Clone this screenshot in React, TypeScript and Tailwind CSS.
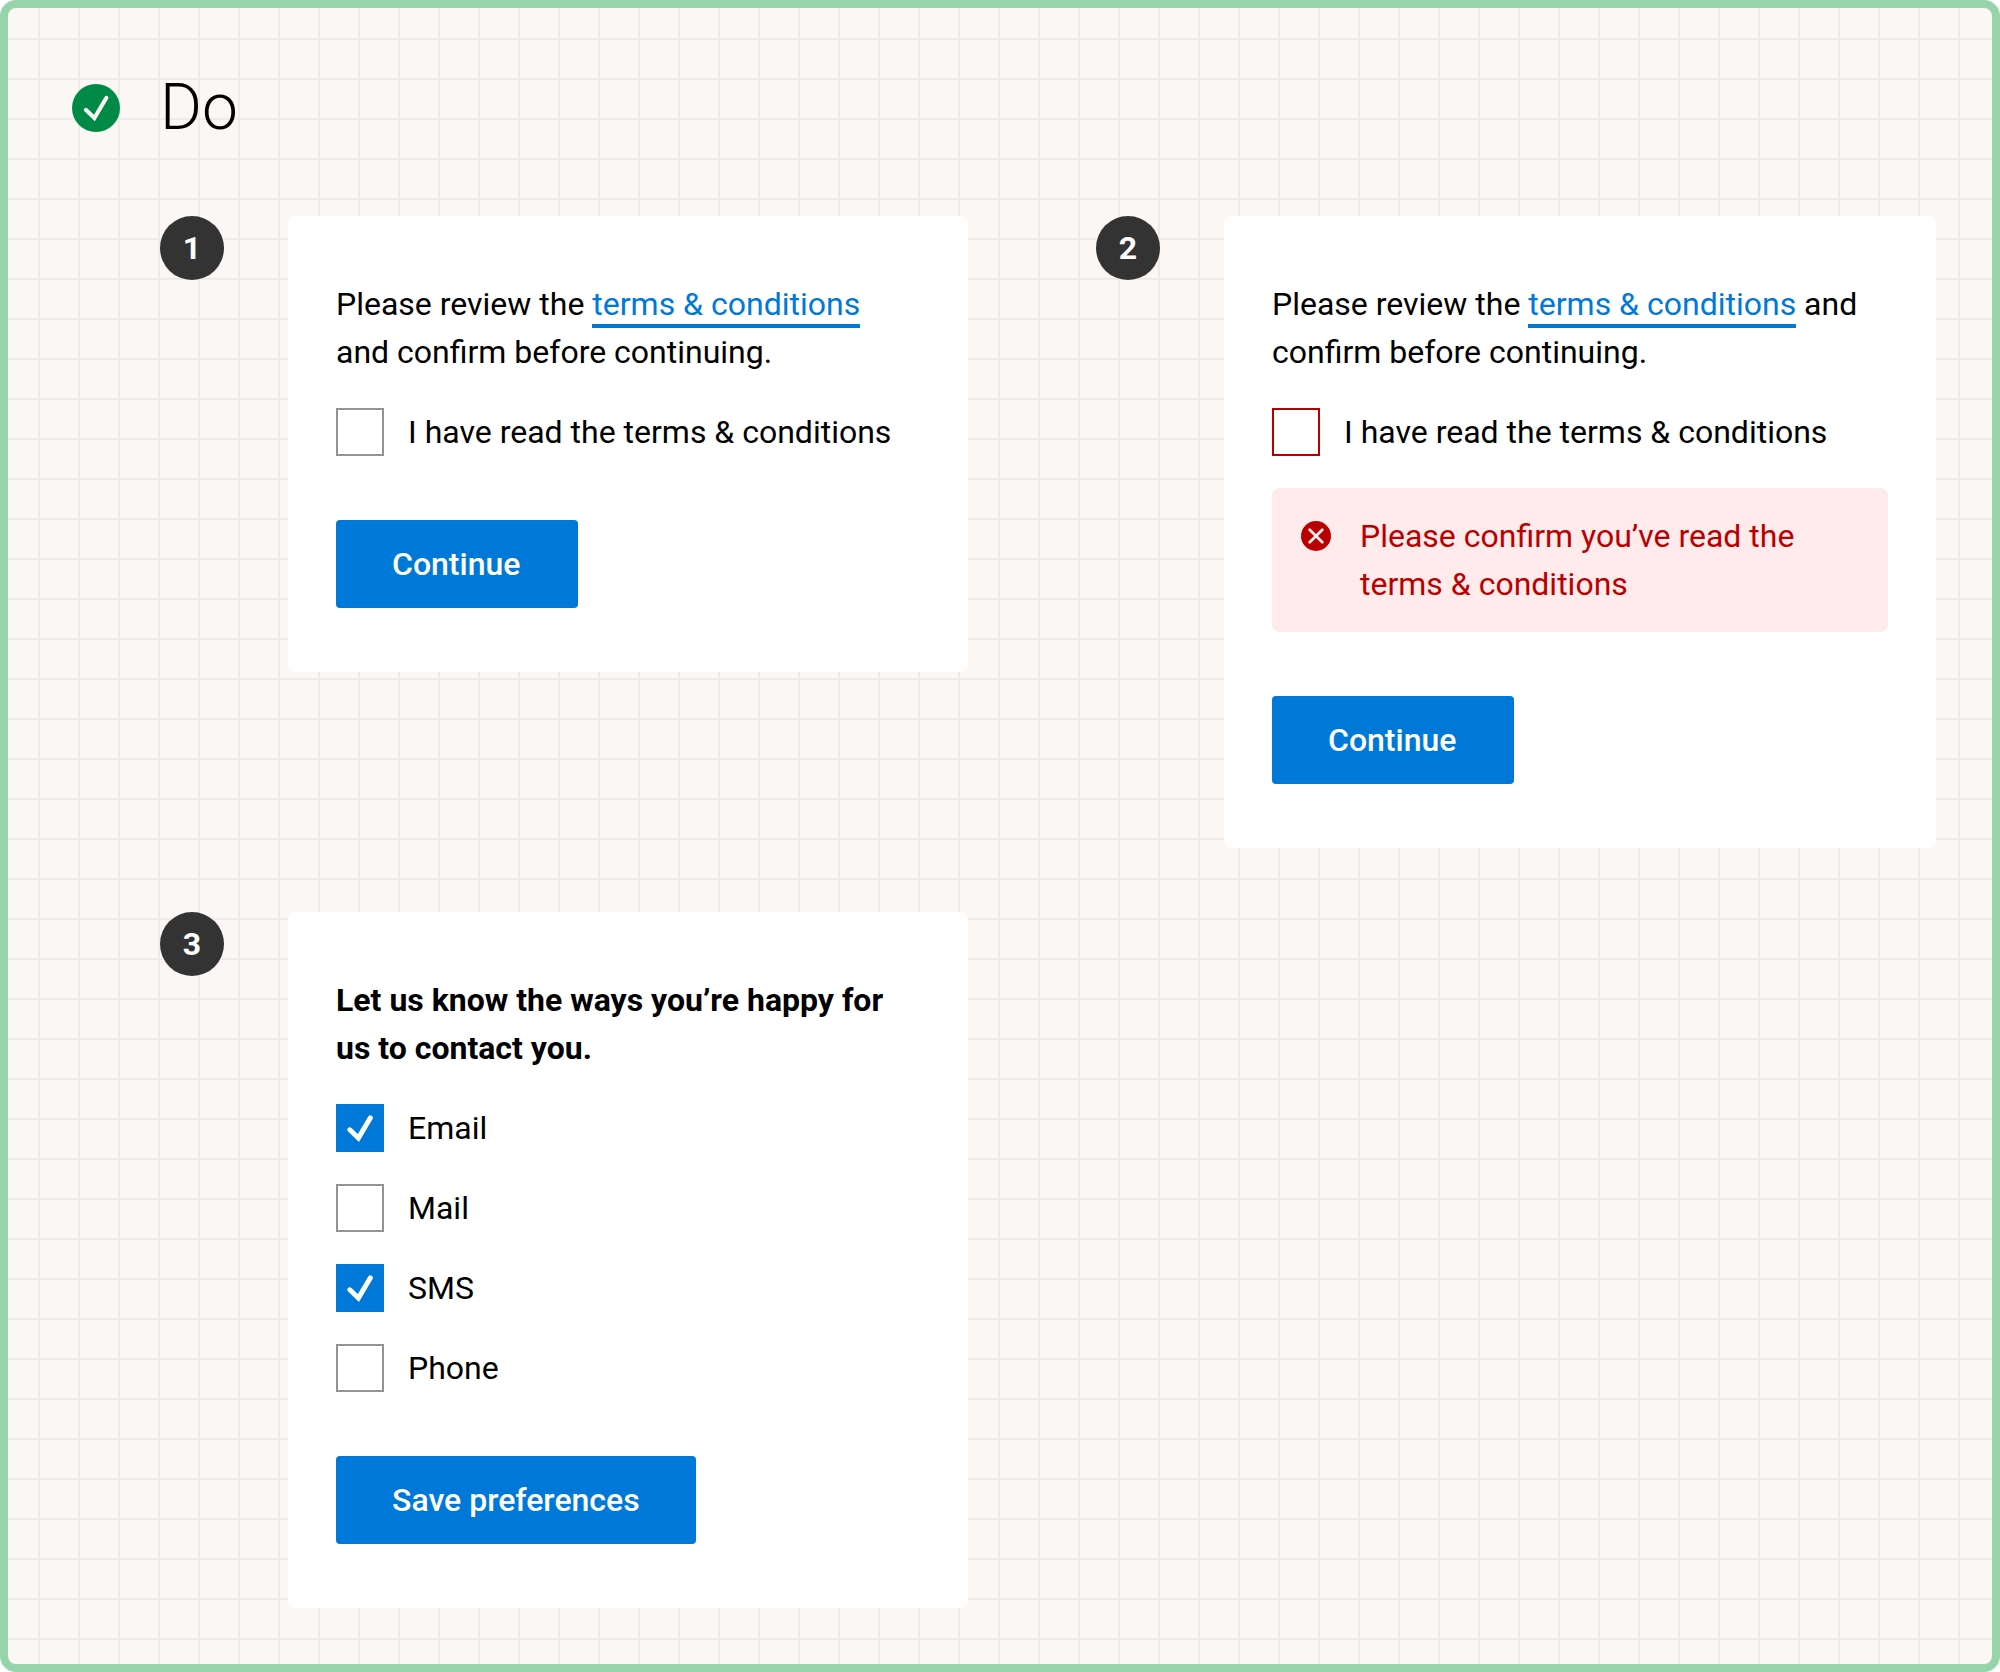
import type { ReactNode } from 'react';

function Tick({ className }: { className: string }) {
  return (
    <svg
      viewBox="0 0 48 48"
      className={`size-12 fill-none ${className}`}
      strokeLinecap="round"
      strokeLinejoin="miter"
      aria-hidden="true"
    >
      <path d="M13.8 25.8 22.4 34 34.4 13.8" />
    </svg>
  );
}

function ErrorIcon() {
  return (
    <svg viewBox="0 0 40 40" className="my-1 size-10 shrink-0" aria-hidden="true">
      <circle cx="20" cy="20" r="15" fill="#b90000" />
      <path d="m13.7 13.7 12.6 12.6m0-12.6-12.6 12.6" fill="none" stroke="#ffebeb" strokeWidth="2.8" strokeLinecap="round" />
    </svg>
  );
}

function Checkbox({
  id,
  label,
  checked = false,
  invalid = false,
}: {
  id: string;
  label: string;
  checked?: boolean;
  invalid?: boolean;
}) {
  return (
    <div className="flex items-start gap-6">
      <span className="grid size-12 shrink-0">
        <input
          id={id}
          type="checkbox"
          defaultChecked={checked}
          aria-invalid={invalid}
          className={`peer col-start-1 row-start-1 size-12 appearance-none border-2 bg-white checked:border-[#0078d7] checked:bg-[#0078d7] ${
            invalid ? 'border-[#b90000]' : 'border-[#949494]'
          }`}
        />
        <Tick className="pointer-events-none invisible col-start-1 row-start-1 stroke-white stroke-5 peer-checked:visible" />
      </span>
      <label htmlFor={id}>{label}</label>
    </div>
  );
}

function Button({ children }: { children: ReactNode }) {
  return (
    <button type="button" className="mt-16 min-w-[242px] rounded bg-[#0078d7] px-14 py-5 text-left font-medium text-white">
      {children}
    </button>
  );
}

function TermsText() {
  return (
    <p className="mb-8">
      Please review the{' '}
      <a href="#terms" className="border-b-4 border-[#0078d7] pb-px text-[#0078d7]">
        terms &amp; conditions
      </a>{' '}
      and confirm before continuing.
    </p>
  );
}

function Example({ number, children }: { number: number; children: ReactNode }) {
  return (
    <li className="flex items-start gap-16">
      <span className="flex size-16 shrink-0 items-center justify-center rounded-full bg-[#333333] font-bold text-white">
        {number}
      </span>
      <form className="min-w-0 flex-1 rounded-lg bg-white px-12 py-16">{children}</form>
    </li>
  );
}

export default function App() {
  return (
    <main className="min-h-screen rounded-2xl border-8 border-[#97d4aa] bg-[#fbf7f5] bg-[linear-gradient(to_right,transparent_30px,#efebe9_30px,#efebe9_32px,transparent_32px),linear-gradient(to_bottom,transparent_30px,#efebe9_30px,#efebe9_32px,transparent_32px)] bg-size-[40px_40px] bg-origin-padding py-14 pr-14 pl-16 font-['Roboto',sans-serif] text-[32px] leading-12 text-black">
      <header className="flex items-center gap-10">
        <Tick className="rounded-full bg-[#008a45] stroke-[#fbf7f5] stroke-4" />
        <h1 className="text-[64px] leading-[88px] font-light">Do</h1>
      </header>

      <ol className="mt-16 grid grid-cols-[808fr_840fr] gap-x-32 gap-y-16 pl-[88px]">
        <Example number={1}>
          <TermsText />
          <Checkbox id="terms" label="I have read the terms & conditions" />
          <Button>Continue</Button>
        </Example>

        <Example number={2}>
          <TermsText />
          <Checkbox id="terms-invalid" label="I have read the terms & conditions" invalid />
          <div role="alert" className="mt-8 flex items-start gap-6 rounded-lg bg-[#ffebeb] p-6 text-[#b90000]">
            <ErrorIcon />
            <p>Please confirm you’ve read the terms &amp; conditions</p>
          </div>
          <Button>Continue</Button>
        </Example>

        <Example number={3}>
          <fieldset className="flex flex-col gap-8">
            <legend className="mb-8 font-bold">Let us know the ways you’re happy for us to contact you.</legend>
            <Checkbox id="email" label="Email" checked />
            <Checkbox id="mail" label="Mail" />
            <Checkbox id="sms" label="SMS" checked />
            <Checkbox id="phone" label="Phone" />
          </fieldset>
          <Button>Save preferences</Button>
        </Example>
      </ol>
    </main>
  );
}
